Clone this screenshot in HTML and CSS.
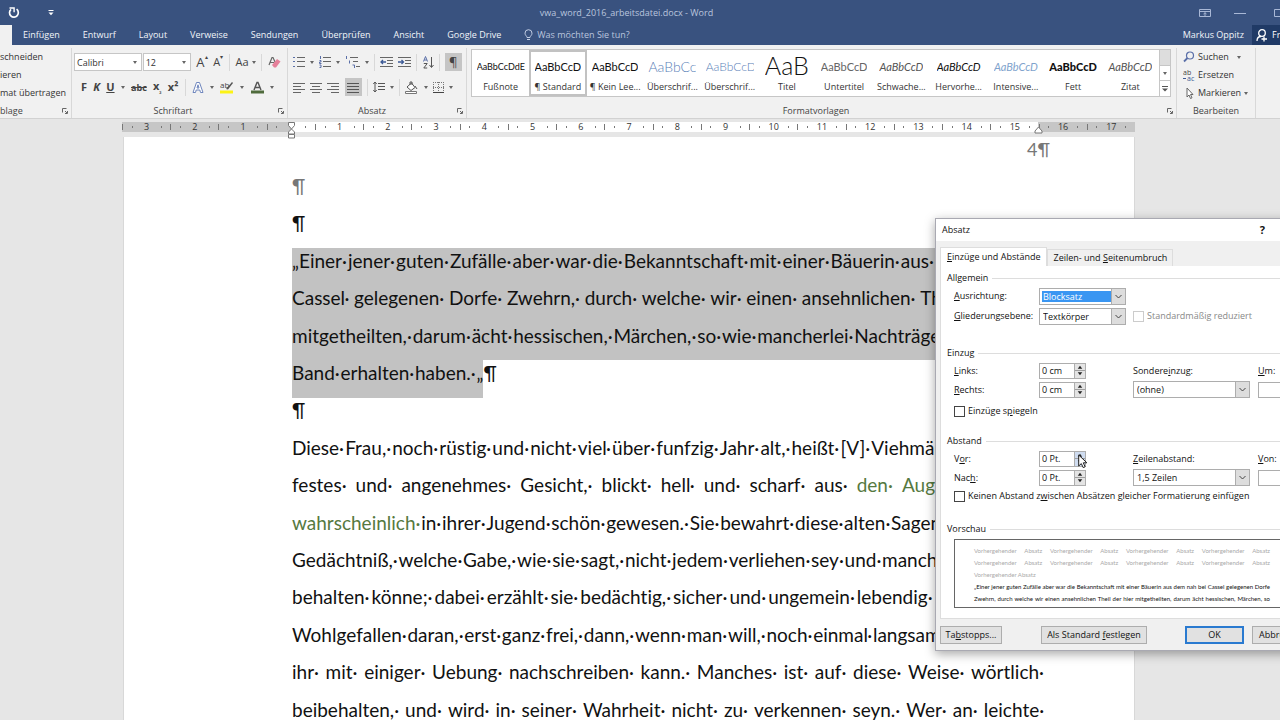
FILE: index.html
```html
<!DOCTYPE html>
<html lang="de">
<head>
<meta charset="utf-8">
<title>vwa_word_2016_arbeitsdatei.docx - Word</title>
<link rel="stylesheet" href="styles.css">
</head>
<body>
<header class="titlebar">
  <div class="quick">
    <button aria-label="Wiederholen"><svg width="14" height="14" viewBox="0 0 14 14"><path d="M4 3.4A4.4 4.4 0 1 0 9.600 3.200" fill="none" stroke="#fff" stroke-width="1.7"/><path d="M2.500 2h4.600v4.200" fill="none" stroke="#fff" stroke-width="1.4"/></svg></button>
    <button aria-label="Anpassen"><svg width="8" height="8" viewBox="0 0 8 8"><path d="M1.5 1.5h5" stroke="#fff"/><path d="M1.5 3.5h5L4 6.3z" fill="#fff"/></svg></button>
  </div>
  <div class="title">vwa_word_2016_arbeitsdatei.docx - Word</div>
  <div class="winbtns">
    <button aria-label="Menüband"><svg width="12" height="10" viewBox="0 0 12 10"><path d="M.5 1.5h11v7H.5zM.5 3.5h11M6 8V4.800M4.500 6 6 4.700 7.500 6" fill="none" stroke="#a9b8d6"/></svg></button>
    <button aria-label="Minimieren"><svg width="12" height="10" viewBox="0 0 12 10"><path d="M0 5.500h12" stroke="#a9b8d6"/></svg></button>
    <button aria-label="Maximieren"><svg width="12" height="10" viewBox="0 0 12 10"><path d="M.5 1.500h9v7h-9z" fill="none" stroke="#a9b8d6"/></svg></button>
  </div>
</header>
<nav class="tabs">
  <span class="tab-active"></span>
  <button>Einfügen</button><button>Entwurf</button><button>Layout</button><button>Verweise</button><button>Sendungen</button><button>Überprüfen</button><button>Ansicht</button><button>Google Drive</button>
  <button class="tell"><svg width="9" height="12" viewBox="0 0 9 12"><path d="M3 8.500C3 7 1 6.500 1 4.200a3.500 3.500 0 0 1 7 0C8 6.500 6 7 6 8.500zM3 10.500h3" fill="none" stroke="#c3cee4"/></svg>Was möchten Sie tun?</button>
  <button class="user">Markus Oppitz</button>
  <button class="share"><svg width="12" height="13" viewBox="0 0 12 13"><circle cx="6" cy="4" r="3.300" fill="none" stroke="#fff" stroke-width="1.300"/><path d="M1 12c0-3 2-4.500 4-4.500M8 7.500v5M5.500 10h5.500" fill="none" stroke="#fff" stroke-width="1.300"/></svg>Freigeben</button>
</nav>

<section class="ribbon">
  <div class="group clip">
    <div class="clip-items"><button>schneiden</button><button>ieren</button><button>mat übertragen</button></div>
    <div class="caption"><span>blage</span><svg class="launch" viewBox="0 0 6 6"><path d="M.5 4.500v-4h4M3 3l2 2M5.500 3v2.500H3" /></svg></div>
  </div>

  <div class="group font">
    <div class="row">
      <div class="combo"><input class="w-font" aria-label="Schriftart" value="Calibri"><i class="dd"></i></div>
      <div class="combo size"><input class="w-size" aria-label="Schriftgrad" value="12"><i class="dd"></i></div>
      <button class="ic big">A<sup>▴</sup></button><button class="ic mid">A<sup>▾</sup></button>
      <i class="sep"></i><button class="ic aa">Aa <i class="dd"></i></button><i class="sep"></i>
      <button class="ic" aria-label="Formatierung löschen"><svg width="13" height="13" viewBox="0 0 13 13"><path d="M1 9 4 1.500h1L7.500 7M2.500 6.500h3.500" fill="none" stroke="#666" stroke-width="1.200"/><path d="m4 9 5-6 3.500 2.500L8 11.500H6z" fill="#e5809a"/></svg></button>
    </div>
    <div class="row second">
      <button class="ic"><b>F</b></button><button class="ic"><b><em>K</em></b></button><button class="ic"><b><u>U</u></b></button><i class="dd"></i>
      <button class="ic"><b><s>abc</s></b></button><button class="ic"><b>x<sub>₂</sub></b></button><button class="ic"><b>x²</b></button><i class="sep"></i>
      <button class="ic" aria-label="Texteffekte"><svg width="12" height="13" viewBox="0 0 12 13"><path d="M1 11.500 4.500 1.500h3L11 11.500H8.500L7.800 9H4.200l-.7 2.500zM5 7h2L6 3.800z" fill="#fff" stroke="#6f86bd"/></svg></button><i class="dd"></i>
      <button class="ic" aria-label="Hervorhebung"><svg width="14" height="13" viewBox="0 0 14 13"><text x="0" y="7" font-size="8" font-family="Open Sans, sans-serif" fill="#444">ab</text><path d="m6 8 6-7 1 1-5 6.500z" fill="#555"/><path d="M0 9.500h13v3H0z" fill="#fcf315"/></svg></button><i class="dd"></i>
      <button class="ic" aria-label="Schriftfarbe"><svg width="13" height="13" viewBox="0 0 13 13"><path d="M3 9 6 1.500h1L10 9M4 6.500h5" fill="none" stroke="#555" stroke-width="1.400"/><path d="M0 9.500h13v3H0z" fill="#4f6b3c"/></svg></button><i class="dd"></i>
    </div>
    <div class="caption"><span>Schriftart</span><svg class="launch" viewBox="0 0 6 6"><path d="M.5 4.500v-4h4M3 3l2 2M5.500 3v2.500H3" /></svg></div>
  </div>

  <div class="group para">
    <div class="row">
      <button class="ic" aria-label="Aufzählung"><svg width="12" height="12" viewBox="0 0 12 12"><path d="M4 1.500h8M4 5.500h8M4 10.500h8" stroke="#666"/><path d="M0 1.500h2M0 5.500h2M0 10.500h2" stroke="#5a6fa8"/></svg></button><i class="dd"></i>
      <button class="ic" aria-label="Nummerierung"><svg width="12" height="12" viewBox="0 0 12 12"><path d="M4 1.500h8M4 5.500h8M4 10.500h8" stroke="#666"/><path d="M1.500 0v3M.5 4.500h1.500v1.500H.5v1.500h2M.5 9h1.500v2.500H.5" fill="none" stroke="#5a6fa8"/></svg></button><i class="dd"></i>
      <button class="ic" aria-label="Liste"><svg width="14" height="12" viewBox="0 0 14 12"><path d="M4 1.500h8M7 5.500h5M10 10.500h4" stroke="#666"/><path d="M.5 0v3M3.500 4.500v3M6.500 9h2v3" fill="none" stroke="#5a6fa8"/></svg></button><i class="dd"></i><i class="sep"></i>
      <button class="ic" aria-label="Einzug verkleinern"><svg width="13" height="11" viewBox="0 0 13 11"><path d="M0 .5h13M7 3.500h6M7 6.500h6M0 9.500h13" stroke="#666"/><path d="M6 5H1M3 3l-2 2 2 2" fill="none" stroke="#3c5a96" stroke-width="1.300"/></svg></button>
      <button class="ic" aria-label="Einzug vergrößern"><svg width="13" height="11" viewBox="0 0 13 11"><path d="M0 .5h13M7 3.500h6M7 6.500h6M0 9.500h13" stroke="#666"/><path d="M0 5h5M3.500 3l2 2-2 2" fill="none" stroke="#3c5a96" stroke-width="1.300"/></svg></button><i class="sep"></i>
      <button class="ic" aria-label="Sortieren"><svg width="11" height="13" viewBox="0 0 11 13"><path d="M.5 5.500 2.500.5l2 5M1.200 4h2.600" fill="none" stroke="#5a6fa8"/><path d="M.8 7.500h3.400l-3.400 4.500h3.400M8.500 1v10M6.500 9l2 2.500 2-2.500" fill="none" stroke="#555"/></svg></button><i class="sep"></i>
      <button class="ic on pil">¶</button>
    </div>
    <div class="row second">
      <button class="ic" aria-label="Linksbündig"><svg width="12" height="11" viewBox="0 0 12 11"><path d="M0 1.500h12M0 4.500h8M0 7.500h12M0 10.500h8" stroke="#666"/></svg></button>
      <button class="ic" aria-label="Zentriert"><svg width="12" height="11" viewBox="0 0 12 11"><path d="M0 1.500h12M2 4.500h8M0 7.500h12M2 10.500h8" stroke="#666"/></svg></button>
      <button class="ic" aria-label="Rechtsbündig"><svg width="12" height="11" viewBox="0 0 12 11"><path d="M0 1.500h12M4 4.500h8M0 7.500h12M4 10.500h8" stroke="#666"/></svg></button>
      <button class="ic on" aria-label="Blocksatz"><svg width="12" height="11" viewBox="0 0 12 11"><path d="M0 1.500h12M0 4.500h12M0 7.500h12M0 10.500h12" stroke="#555"/></svg></button><i class="sep"></i>
      <button class="ic" aria-label="Zeilenabstand"><svg width="12" height="12" viewBox="0 0 12 12"><path d="M5 2.500h7M5 5.500h7M5 8.500h7M2 1v10M.3 3 2 1l1.700 2M.3 9 2 11l1.700-2" fill="none" stroke="#555"/></svg></button><i class="dd"></i><i class="sep"></i>
      <button class="ic" aria-label="Schattierung"><svg width="13" height="13" viewBox="0 0 13 13"><path d="m2 6 4.500-4L10 6.500 6 9.500zM5 4V1h2v3M10 5l2 3" fill="#fff" stroke="#555"/><path d="M.5 10.500h11v2H.5z" fill="#fff" stroke="#777"/></svg></button><i class="dd"></i>
      <button class="ic" aria-label="Rahmen"><svg width="11" height="11" viewBox="0 0 11 11"><path d="M.5 0v10M5.500 0v10M10.500 0v10M0 .5h11M0 5.500h11" stroke="#777" stroke-dasharray="1 1"/><path d="M0 10.500h11" stroke="#444"/></svg></button><i class="dd"></i>
    </div>
    <div class="caption"><span>Absatz</span><svg class="launch" viewBox="0 0 6 6"><path d="M.5 4.500v-4h4M3 3l2 2M5.500 3v2.500H3" /></svg></div>
  </div>

  <div class="group styles">
    <div class="gallery">
      <button><span class="s small">AaBbCcDdE</span><span>Fußnote</span></button>
      <button class="sel"><span class="s">AaBbCcD</span><span>¶ Standard</span></button>
      <button><span class="s">AaBbCcD</span><span>¶ Kein Lee...</span></button>
      <button><span class="s h1">AaBbCc</span><span>Überschrif...</span></button>
      <button><span class="s h2">AaBbCcD</span><span>Überschrif...</span></button>
      <button><span class="s ttl">AaB</span><span>Titel</span></button>
      <button><span class="s sub">AaBbCcD</span><span>Untertitel</span></button>
      <button><span class="s it grey">AaBbCcD</span><span>Schwache...</span></button>
      <button><span class="s it">AaBbCcD</span><span>Hervorhe...</span></button>
      <button><span class="s it blue">AaBbCcD</span><span>Intensive...</span></button>
      <button><span class="s bold">AaBbCcD</span><span>Fett</span></button>
      <button><span class="s it grey">AaBbCcD</span><span>Zitat</span></button>
      <div class="scroll"><button aria-label="Hoch" class="off"></button><button aria-label="Runter"><i class="dd"></i></button><button aria-label="Mehr"><svg width="6" height="6" viewBox="0 0 6 6"><path d="M0 .5h6" stroke="#555"/><path d="M0 2.500h6L3 5.500z" fill="#555"/></svg></button></div>
    </div>
    <div class="caption"><span>Formatvorlagen</span><svg class="launch" viewBox="0 0 6 6"><path d="M.5 4.500v-4h4M3 3l2 2M5.500 3v2.500H3" /></svg></div>
  </div>

  <div class="group edit">
    <div class="edit-items">
      <button><svg width="12" height="12" viewBox="0 0 12 12"><circle cx="7" cy="4.500" r="3.500" fill="none" stroke="#5a6fa8" stroke-width="1.200"/><path d="M4.500 7 1 10.500" stroke="#5a6fa8" stroke-width="1.800"/></svg>Suchen<i class="dd"></i></button>
      <button><svg width="12" height="12" viewBox="0 0 12 12"><text x="0" y="6" font-size="7" font-family="Open Sans, sans-serif" fill="#444">ab</text><text x="4" y="12" font-size="7" font-family="Open Sans, sans-serif" fill="#3c5a96">ac</text><path d="M0 9.500h3" stroke="#3c5a96"/></svg>Ersetzen</button>
      <button><svg width="12" height="12" viewBox="0 0 12 12"><path d="M4 1v9l2-2 1.500 3.500 1.500-.7L7.500 7.500H10z" fill="#fff" stroke="#666"/></svg>Markieren<i class="dd tight"></i></button>
    </div>
    <div class="caption"><span>Bearbeiten</span></div>
  </div>
</section>

<main class="work">
  <div class="ruler">
    <div><i></i><b>3</b><i></i></div><div><i></i><b>2</b><i></i></div><div><i></i><b>1</b><i></i></div><div><i></i><b></b><i></i></div><div><i></i><b>1</b><i></i></div><div><i></i><b>2</b><i></i></div><div><i></i><b>3</b><i></i></div><div><i></i><b>4</b><i></i></div><div><i></i><b>5</b><i></i></div><div><i></i><b>6</b><i></i></div><div><i></i><b>7</b><i></i></div><div><i></i><b>8</b><i></i></div><div><i></i><b>9</b><i></i></div><div><i></i><b>10</b><i></i></div><div><i></i><b>11</b><i></i></div><div><i></i><b>12</b><i></i></div><div><i></i><b>13</b><i></i></div><div><i></i><b>14</b><i></i></div><div><i></i><b>15</b><i></i></div><div><i></i><b>16</b><i></i></div><div><i></i><b>17</b><i></i></div>
    <svg class="mark-l" width="9" height="18" viewBox="0 0 9 18"><path d="M1.500.5h6v3l-3 3.500-3-3.500zM4.500 7l3 3v2h-6v-2zM1.500 12.500h6v3.500h-6z" fill="#fff" stroke="#777"/></svg>
    <svg class="mark-r" width="9" height="8" viewBox="0 0 9 8"><path d="m4.500 1 3.500 4v2H1V5z" fill="#fff" stroke="#777"/></svg>
  </div>
  <article class="page">
    <p class="pageno">4¶</p>
    <div class="text">
      <p class="grey">¶</p>
      <p>¶</p>
      <p class="j hl">„Einer·<i> </i>jener·<i> </i>guten·<i> </i>Zufälle·<i> </i>aber·<i> </i>war·<i> </i>die·<i> </i>Bekanntschaft·<i> </i>mit·<i> </i>einer·<i> </i>Bäuerin·<i> </i>aus·<i> </i>dem·<i> </i>nah·<i> </i>bei·</p>
      <p class="j hl">Cassel·<i> </i>gelegenen·<i> </i>Dorfe·<i> </i>Zwehrn,·<i> </i>durch·<i> </i>welche·<i> </i>wir·<i> </i>einen·<i> </i>ansehnlichen·<i> </i>Theil·<i> </i>der·<i> </i>hier·</p>
      <p class="j hl">mitgetheilten,·<i> </i>darum·<i> </i>ächt·<i> </i>hessischen,·<i> </i>Märchen,·<i> </i>so·<i> </i>wie·<i> </i>mancherlei·<i> </i>Nachträge·<i> </i>zum·<i> </i>ersten·</p>
      <p><span class="hl">Band·<i> </i>erhalten·<i> </i>haben.·<i> </i>„</span>¶</p>
      <p>¶</p>
      <p class="j">Diese·<i> </i>Frau,·<i> </i>noch·<i> </i>rüstig·<i> </i>und·<i> </i>nicht·<i> </i>viel·<i> </i>über·<i> </i>funfzig·<i> </i>Jahr·<i> </i>alt,·<i> </i>heißt·<i> </i>[V]·<i> </i>Viehmännin,·<i> </i>hat·<i> </i>ein·</p>
      <p class="j">festes·<i> </i>und·<i> </i>angenehmes·<i> </i>Gesicht,·<i> </i>blickt·<i> </i>hell·<i> </i>und·<i> </i>scharf·<i> </i>aus·<i> </i><span class="green">den·<i> </i>Augen,·<i> </i>und·<i> </i>ist·</span></p>
      <p class="j"><span class="green">wahrscheinlich·</span><i> </i>in·<i> </i>ihrer·<i> </i>Jugend·<i> </i>schön·<i> </i>gewesen.·<i> </i>Sie·<i> </i>bewahrt·<i> </i>diese·<i> </i>alten·<i> </i>Sagen·<i> </i>fest·<i> </i>in·<i> </i>dem·</p>
      <p class="j">Gedächtniß,·<i> </i>welche·<i> </i>Gabe,·<i> </i>wie·<i> </i>sie·<i> </i>sagt,·<i> </i>nicht·<i> </i>jedem·<i> </i>verliehen·<i> </i>sey·<i> </i>und·<i> </i>mancher·<i> </i>gar·<i> </i>nichts·</p>
      <p class="j">behalten·<i> </i>könne;·<i> </i>dabei·<i> </i>erzählt·<i> </i>sie·<i> </i>bedächtig,·<i> </i>sicher·<i> </i>und·<i> </i>ungemein·<i> </i>lebendig·<i> </i>mit·<i> </i>eigenem·</p>
      <p class="j">Wohlgefallen·<i> </i>daran,·<i> </i>erst·<i> </i>ganz·<i> </i>frei,·<i> </i>dann,·<i> </i>wenn·<i> </i>man·<i> </i>will,·<i> </i>noch·<i> </i>einmal·<i> </i>langsam,·<i> </i>so·<i> </i>daß·<i> </i>man·</p>
      <p class="j">ihr·<i> </i>mit·<i> </i>einiger·<i> </i>Uebung·<i> </i>nachschreiben·<i> </i>kann.·<i> </i>Manches·<i> </i>ist·<i> </i>auf·<i> </i>diese·<i> </i>Weise·<i> </i>wörtlich·</p>
      <p class="j">beibehalten,·<i> </i>und·<i> </i>wird·<i> </i>in·<i> </i>seiner·<i> </i>Wahrheit·<i> </i>nicht·<i> </i>zu·<i> </i>verkennen·<i> </i>seyn.·<i> </i>Wer·<i> </i>an·<i> </i>leichte·</p>
    </div>
  </article>
</main>

<form class="dialog" role="dialog" aria-label="Absatz">
  <div class="dlg-title"><span>Absatz</span><button type="button" class="help">?</button></div>
  <div class="dlg-tabs"><button type="button" class="cur"><u>E</u>inzüge und Abstände</button><button type="button">Zeilen- und <u>S</u>eitenumbruch</button></div>
  <div class="panel">
    <fieldset class="f1"><legend>Allgemein</legend>
      <div class="fr"><label for="a1"><u>A</u>usrichtung:</label><div class="selbox"><select id="a1" class="marked"><option>Blocksatz</option></select></div></div>
      <div class="fr"><label for="a2"><u>G</u>liederungsebene:</label><div class="selbox"><select id="a2"><option>Textkörper</option></select></div><label class="chk dis"><input type="checkbox" disabled>Standardmäßig reduziert</label></div>
    </fieldset>
    <fieldset class="f2"><legend>Einzug</legend>
      <div class="fr"><label for="b1"><u>L</u>inks:</label><div class="spin"><input id="b1" value="0 cm"><i></i></div><label for="b3" class="mid-l">Sondere<u>i</u>nzug:</label><label for="b4"><u>U</u>m:</label></div>
      <div class="fr"><label for="b2"><u>R</u>echts:</label><div class="spin"><input id="b2" value="0 cm"><i></i></div><div class="selbox wide"><select id="b3"><option>(ohne)</option></select></div><input id="b4" class="box"></div>
      <label class="chk"><input type="checkbox"><span>Einzüge s<u>p</u>iegeln</span></label>
    </fieldset>
    <fieldset class="f3"><legend>Abstand</legend>
      <div class="fr"><label for="c1">V<u>o</u>r:</label><div class="spin hot"><input id="c1" value="0 Pt."><i></i></div><label for="c3" class="mid-l"><u>Z</u>eilenabstand:</label><label for="c4"><u>V</u>on:</label></div>
      <div class="fr"><label for="c2">Nac<u>h</u>:</label><div class="spin"><input id="c2" value="0 Pt."><i></i></div><div class="selbox wide"><select id="c3"><option>1,5 Zeilen</option></select></div><input id="c4" class="box"></div>
      <label class="chk"><input type="checkbox"><span>Keinen Abstand z<u>w</u>ischen Absätzen gleicher Formatierung einfügen</span></label>
    </fieldset>
    <fieldset class="f4"><legend>Vorschau</legend>
      <div class="preview">
        <p class="pv">Vorhergehender Absatz Vorhergehender Absatz Vorhergehender Absatz Vorhergehender Absatz</p>
        <p class="pv">Vorhergehender Absatz Vorhergehender Absatz Vorhergehender Absatz Vorhergehender Absatz</p>
        <p class="pv last">Vorhergehender Absatz</p>
        <p>„Einer jener guten Zufälle aber war die Bekanntschaft mit einer Bäuerin aus dem nah bei Cassel gelegenen Dorfe</p>
        <p>Zwehrn, durch welche wir einen ansehnlichen Theil der hier mitgetheilten, darum ächt hessischen, Märchen, so</p>
      </div>
    </fieldset>
  </div>
  <div class="dlg-btns"><button type="button" class="w1">Ta<u>b</u>stopps...</button><button type="button" class="w2">Als Standard <u>f</u>estlegen</button><button type="button" class="ok">OK</button><button type="button" class="w3">Abbrechen</button></div>
  <svg class="cursor" width="10" height="15" viewBox="0 0 10 15"><path d="M.7 1v11l2.600-2.400 1.900 4 1.900-.8-1.800-4h3.600z" fill="#fff" stroke="#222"/></svg>
</form>
</body>
</html>
```

FILE: styles.css
```css
* { box-sizing: border-box; }
body { margin: 0; height: 100vh; overflow: hidden; position: relative; display: flex; flex-direction: column; background: #e6e6e6; font: 9px/14px "Open Sans", "Noto Sans", sans-serif; color: #333; }
button { font: inherit; color: inherit; background: none; border: 0; padding: 0; display: flex; align-items: center; white-space: nowrap; }
input, select { font: inherit; color: inherit; }
p { margin: 0; }
svg { flex: none; }

.titlebar { height: 25px; flex: none; display: flex; align-items: center; background: #39527f; color: #b9c5de; overflow: hidden; }
.quick { display: flex; align-items: center; gap: 26px; padding-left: 7px; flex: 1; }
.title { flex: none; margin-right: 40px; }
.winbtns { flex: 1; display: flex; gap: 28px; justify-content: flex-end; margin-right: -6px; }
.winbtns button:first-child { margin-right: -5px; }
.tabs { height: 20px; flex: none; display: flex; align-items: center; background: #39527f; color: #f2f5fa; gap: 23px; overflow: hidden; }
.tab-active { width: 12px; height: 20px; background: #f1f1f1; margin-right: -12px; }
.tabs .tell { color: #b9c5de; gap: 4px; }
.tabs .user { margin-left: auto; }
.tabs .share { width: 28px; height: 20px; margin-left: -15px; padding-left: 4px; gap: 4px; background: #203a66; color: #fff; overflow: hidden; }

.ribbon { height: 74px; flex: none; display: flex; background: #f1f1f1; border-bottom: 1px solid #d2d2d2; padding: 3px 0 0; }
.group { display: flex; flex-direction: column; border-right: 1px solid #d8d8d8; flex: none; }
.caption { margin-top: auto; height: 14px; display: flex; align-items: center; justify-content: center; color: #444; }
.caption span { flex: 1; text-align: center; padding-right: 6px; }
.edit .caption span { padding: 0; }
.launch { width: 6px; height: 6px; margin-right: 3px; }
.launch path { fill: none; stroke: #666; }
.clip { width: 72px; }
.clip-items { display: flex; flex-direction: column; gap: 4px; padding-top: 2px; }
.clip .caption span { text-align: left; }
.font { width: 216px; padding-left: 2px; }
.para { width: 179px; padding-left: 5px; }
.styles { flex: 1; padding-left: 4px; min-width: 0; }
.edit { width: 79px; margin-right: 24px; }
.row { display: flex; align-items: center; height: 18px; margin-top: 5px; }
.second { margin-top: 7px; }
.font .row { justify-content: space-between; padding-right: 6px; }
.font .second { padding: 0 13px 0 7px; }
.para .row { justify-content: space-between; padding-right: 4px; }
.para .second { padding-right: 13px; }
.combo { display: flex; align-items: center; height: 18px; border: 1px solid #c6c6c6; background: #fff; padding-right: 4px; }
.combo.size { margin-left: -5px; }
.combo input { border: 0; background: none; padding: 0 2px; height: 16px; }
.w-font { width: 58px; }
.w-size { width: 38px; }
.dd { flex: none; display: block; width: 0; height: 0; border: 2px solid transparent; border-top: 3px solid #666; border-bottom: 0; }
.ic { justify-content: center; height: 17px; font-size: 11px; color: #444; }
.ic.big { font-size: 13px; }
.ic.aa { gap: 3px; }
.ic sup, .ic sub { font-size: 6px; line-height: 6px; }
.ic sup { align-self: flex-start; }
.ic s { font-size: 9px; }
.ic.on { background: #c5c5c5; width: 17px; height: 18px; }
.ic.pil { font-size: 13px; }
.sep { width: 1px; height: 17px; background: #d8d8d8; }

.gallery { display: flex; height: 48px; margin-top: 1px; margin-right: 5px; background: #fff; border: 1px solid #c6c6c6; }
.gallery > button { flex: 1 1 0; min-width: 0; flex-direction: column; overflow: hidden; padding: 4px 2px 0; }
.gallery .sel { box-shadow: inset 0 0 0 2px #c2c2c2; }
.s { height: 26px; line-height: 26px; font-family: Lato, sans-serif; font-size: 11px; color: #111; max-width: 48px; overflow: hidden; }
.s.small { font-size: 9px; }
.s.h1 { font-size: 14px; color: #5b82b8; font-weight: 300; }
.s.h2 { font-size: 12px; color: #5b82b8; font-weight: 300; }
.s.ttl { font-size: 25px; line-height: 22px; font-weight: 300; }
.s.sub { color: #666; }
.s.it { font-style: italic; }
.s.grey { color: #555; }
.s.blue { color: #7fa3cd; }
.s.bold { font-weight: 900; }
.scroll { width: 11px; border-left: 1px solid #c6c6c6; display: flex; flex-direction: column; }
.scroll button { flex: 1; justify-content: center; border-bottom: 1px solid #c6c6c6; }
.scroll button:last-child { border: 0; }
.scroll .off { background: #ddd; }
.edit-items { display: flex; flex-direction: column; gap: 4px; padding: 2px 0 0 6px; }
.edit-items button { gap: 3px; height: 14px; }
.edit-items .dd { margin-left: 5px; }
.edit-items .tight { margin-left: 0; }

.work { flex: 1; min-height: 0; padding: 3px 145px 0 122px; }
.ruler { position: relative; height: 10px; display: grid; grid-template-columns: repeat(21, 1fr); background: linear-gradient(90deg, #c6c6c6 0 169px, #fff 169px 916px, #c6c6c6 916px); line-height: 10px; }
.ruler div { display: flex; align-items: center; justify-content: space-evenly; border-left: 1px solid #777; border-image: linear-gradient(transparent 30%, #777 30% 75%, transparent 75%) 1; }
.ruler i { width: 1px; height: 2px; background: #777; }
.ruler b { width: 11px; font-weight: 400; text-align: center; }
.mark-l { position: absolute; left: 165px; top: 0; }
.mark-r { position: absolute; left: 912px; top: 4px; }
.page { margin: 5px 0 0 1px; height: 100%; padding: 0 84px 0 168px; background: #fff; border: 1px solid #d8d8d8; border-width: 0 1px; font: 19px/25px Lato, sans-serif; font-variant-ligatures: none; color: #111; }
.pageno { text-align: right; color: #777; height: 36px; font-size: 18px; line-height: 24px; }
.grey { color: #777; }
.text p { height: 37px; white-space: nowrap; margin-right: 6px; }
.text p:nth-child(5n+2), .text p:nth-child(5n+4) { height: 38px; }
.text i { font-size: 3px; }
.text .j { text-align: justify; text-align-last: justify; }
.hl { background: #c2c2c2; }
span.hl { display: inline-block; height: 38px; }
.green { color: #56793f; }

.dialog { position: absolute; left: 935px; top: 218px; width: 384px; height: 433px; display: flex; flex-direction: column; background: #f0f0f0; border: 1px solid #a9a9b2; box-shadow: 0 3px 10px rgba(0, 0, 0, .35); line-height: 12px; color: #111; padding: 0 5px 0 4px; }
.dlg-title { height: 22px; margin: 0 -5px 0 -4px; padding: 0 53px 0 6px; background: #fff; display: flex; align-items: center; justify-content: space-between; }
.help { font-size: 11px; font-weight: 700; }
.dlg-tabs { display: flex; align-items: flex-end; height: 25px; }
.dlg-tabs button { display: block; height: 17px; padding: 0 5px; border: 1px solid #ddd; border-bottom: 0; }
.dlg-tabs .cur { height: 19px; padding: 0 6px; background: #fff; }
.panel { flex: 1; background: #fff; border: 1px solid #ddd; border-top: 0; padding: 6px 6px 0; }
fieldset { border: 0; margin: 0; padding: 0 0 0 7px; min-width: 0; }
legend { display: flex; align-items: center; gap: 4px; width: 100%; margin-left: -7px; padding: 0; white-space: nowrap; }
legend::after { content: ""; flex: 1; height: 1px; background: #ddd; }
.f1 { height: 75px; }
.f2, .f3 { height: 88px; }
.fr { display: flex; align-items: center; height: 19px; }
.fr > * { flex: none; }
.f1 .fr { height: 20px; }
.f1 legend, .f2 legend, .f3 legend { margin-bottom: 2px; }
.fr > label:first-child { width: 85px; }
.selbox { position: relative; width: 87px; height: 17px; border: 1px solid #adadad; background: #fff; padding: 2px; }
.selbox::after { content: ""; position: absolute; right: 0; top: 0; width: 13px; height: 15px; background: #ddd url("data:image/svg+xml,%3Csvg xmlns='http://www.w3.org/2000/svg' viewBox='0 0 13 15'%3E%3Cpath d='M3.500 6l3 3 3-3' fill='none' stroke='%23444'/%3E%3C/svg%3E"); border-left: 1px solid #adadad; pointer-events: none; }
.selbox select { appearance: none; display: block; width: 70px; height: 11px; line-height: 11px; border: 0; background: none; padding: 0 1px; }
.selbox .marked { background: #3a96f2; color: #fff; }
.fr .wide { width: 117px; margin: 0 8px 0 47px; }
.spin { width: 47px; height: 16px; border: 1px solid #adadad; display: flex; align-items: center; background: #fff; }
.spin input { width: 34px; border: 0; padding: 0 2px; background: none; height: 14px; }
.spin i { width: 11px; height: 14px; background: #e4e4e4 url("data:image/svg+xml,%3Csvg xmlns='http://www.w3.org/2000/svg' viewBox='0 0 11 14'%3E%3Cpath d='M0 7h11' stroke='%23999'/%3E%3Cpath d='M3 5h5L5.500 2zM3 9h5l-2.500 3z' fill='%23222'/%3E%3C/svg%3E"); border-left: 1px solid #adadad; }
.spin.hot i { background-color: #cfdcf0; }
.mid-l { width: 125px; margin-left: 47px; }
.box { width: 50px; height: 16px; border: 1px solid #adadad; }
.chk { display: flex; align-items: center; gap: 3px; white-space: nowrap; }
.chk input { appearance: none; width: 11px; height: 11px; margin: 0; border: 1px solid #444; background: #fff; }
.f2 .chk { margin-top: 6px; }
.f3 .chk { margin-top: 3px; }
.dis { color: #888; margin-left: 7px; }
.dis input { border-color: #ccc; }
.preview { margin-top: 4px; width: 345px; height: 69px; border: 1px solid #666; padding: 5px 28px 0 19px; font: 6px/12px Lato, sans-serif; color: #111; overflow: hidden; }
.preview p { text-align: justify; text-align-last: justify; white-space: nowrap; }
.preview .pv { color: #aaa; }
.preview .last { text-align-last: left; }
.dlg-btns { display: flex; align-items: center; height: 31px; flex: none; }
.dlg-btns button { display: block; height: 18px; border: 1px solid #adadad; background: #e1e1e1; }
.w1 { width: 62px; }
.w2 { width: 106px; margin-left: 39px; }
.dlg-btns .ok { width: 59px; margin: 0 8px 0 38px; border: 2px solid #2a7ad0; }
.w3 { width: 60px; }
.cursor { position: absolute; left: 142px; top: 235px; }
```
